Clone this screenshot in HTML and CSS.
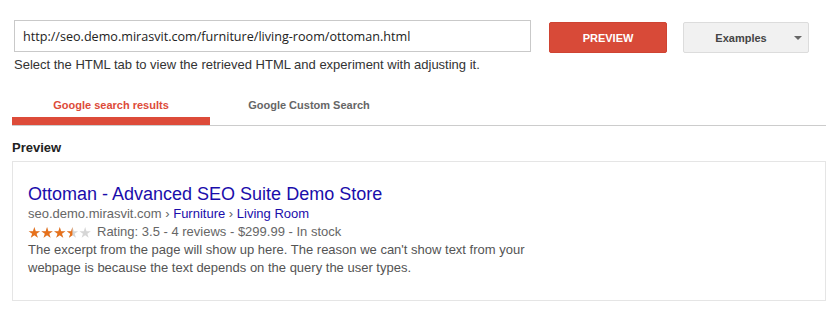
FILE: index.html
```html
<!DOCTYPE html>
<html lang="en">
<head>
  <meta charset="UTF-8">
  <title>Rich Snippets Preview</title>
  <link rel="stylesheet" href="styles.css">
</head>
<body>
  <div class="page">
    <div class="fetch-row">
      <input class="url-input" type="text" value="http://seo.demo.mirasvit.com/furniture/living-room/ottoman.html">
      <button class="btn btn-preview">PREVIEW</button>
      <button class="btn btn-examples">Examples <span class="caret"></span></button>
    </div>
    <p class="hint">Select the HTML tab to view the retrieved HTML and experiment with adjusting it.</p>

    <div class="tabs">
      <div class="tab active">Google search results</div>
      <div class="tab">Google Custom Search</div>
    </div>

    <h4 class="section-title">Preview</h4>
    <div class="result-box">
      <a class="result-title" href="#">Ottoman - Advanced SEO Suite Demo Store</a>
      <div class="result-url">seo.demo.mirasvit.com › <a href="#">Furniture</a> › <a href="#">Living Room</a></div>
      <div class="result-rating">
        <svg class="stars" width="64" height="11" viewBox="0 0 64 11">
          <defs>
            <path id="star" d="M6.35 0 L7.7 4.15 L12.06 4.15 L8.53 6.71 L9.88 10.85 L6.35 8.29 L2.82 10.85 L4.17 6.71 L0.64 4.15 L5 4.15Z"/>
            <clipPath id="rated"><rect x="0" y="0" width="44.4" height="11"/></clipPath>
          </defs>
          <g fill="#d6d6d6">
            <use href="#star"/>
            <use href="#star" x="12.7"/>
            <use href="#star" x="25.4"/>
            <use href="#star" x="38.1"/>
            <use href="#star" x="50.8"/>
          </g>
          <g fill="#e7711b" clip-path="url(#rated)">
            <use href="#star"/>
            <use href="#star" x="12.7"/>
            <use href="#star" x="25.4"/>
            <use href="#star" x="38.1"/>
            <use href="#star" x="50.8"/>
          </g>
        </svg>
        Rating: 3.5 - 4 reviews - $299.99 - In stock
      </div>
      <div class="result-snippet">The excerpt from the page will show up here. The reason we can't show text from your webpage is because the text depends on the query the user types.</div>
    </div>
  </div>
</body>
</html>
```

FILE: styles.css
```css
body {
  margin: 0;
  background: #fff;
  font-family: 'Liberation Sans', Arial, sans-serif;
  color: #333;
}
.page {
  padding: 20px 11px 0 12px;
}
.fetch-row {
  display: flex;
  align-items: flex-start;
  margin-left: 2px;
}
.url-input {
  box-sizing: border-box;
  width: 517px;
  height: 32px;
  margin: 0;
  padding: 0 8px;
  border: 1px solid #c9c9c9;
  font-family: 'Open Sans', sans-serif;
  font-size: 12.6px;
  color: #222;
  outline: none;
}
.btn {
  box-sizing: border-box;
  height: 31px;
  margin-top: 2px;
  border-radius: 2px;
  font-family: 'Liberation Sans', Arial, sans-serif;
  font-size: 11px;
  font-weight: bold;
  cursor: pointer;
}
.btn-preview {
  width: 118px;
  margin-left: 18px;
  background: #d84a38;
  border: 1px solid #cf4332;
  color: #fff;
}
.btn-examples {
  position: relative;
  width: 126px;
  margin-left: 16px;
  background: #f1f1f1;
  border: 1px solid #dcdcdc;
  color: #444;
  padding-right: 16px;
}
.caret {
  position: absolute;
  right: 6px;
  top: 13px;
  width: 0;
  height: 0;
  border-left: 4px solid transparent;
  border-right: 4px solid transparent;
  border-top: 4px solid #666;
}
.hint {
  margin: 4px 0 0 2px;
  font-size: 13px;
  line-height: 15px;
  color: #333;
}
.tabs {
  display: flex;
  margin-top: 18px;
  border-bottom: 1px solid #cccccc;
}
.tab {
  width: 198px;
  padding: 8px 0 4px;
  line-height: 15px;
  text-align: center;
  font-size: 11px;
  font-weight: bold;
  color: #666;
  border-bottom: 8px solid transparent;
}
.tab.active {
  color: #dd4b39;
  border-bottom-color: #dd4b39;
}
.section-title {
  margin: 14px 0 0;
  font-size: 13px;
  line-height: 15px;
  color: #222;
}
.result-box {
  margin-top: 6px;
  padding: 21px 15px 23px;
  border: 1px solid #e5e5e5;
}
.result-title {
  display: block;
  font-size: 18px;
  line-height: 22px;
  color: #1a0dab;
  text-decoration: none;
}
.result-url,
.result-rating,
.result-snippet {
  font-size: 13px;
  line-height: 18px;
  color: #666;
}
.result-url a {
  color: #1a0dab;
  text-decoration: none;
}
.result-rating {
  display: flex;
  align-items: center;
  gap: 5px;
}
.stars {
  display: block;
}
.result-snippet {
  width: 512px;
  color: #545454;
}
```
